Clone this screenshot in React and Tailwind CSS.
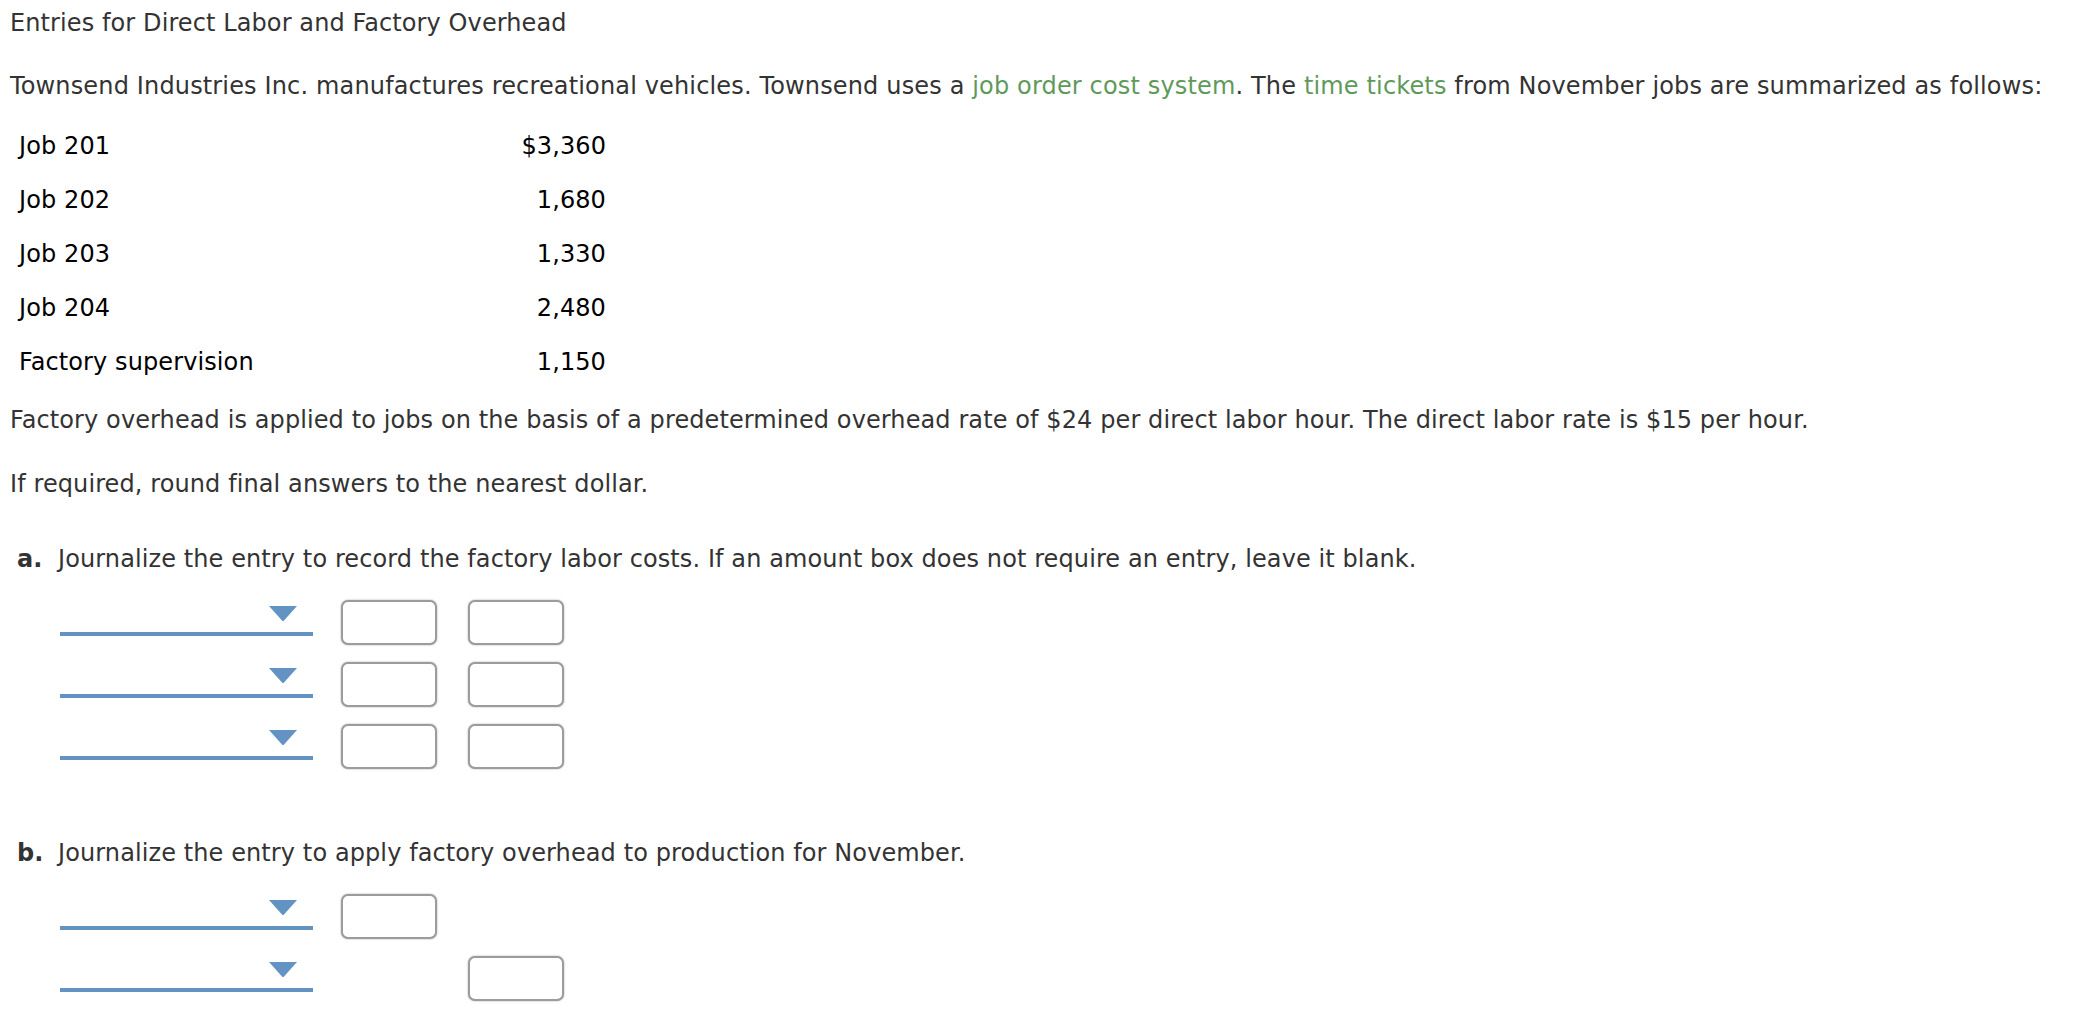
import React from "react";

const font = { fontFamily: '"DejaVu Sans", Verdana, sans-serif' };

function Caret() {
  return (
    <svg width="30" height="17" viewBox="0 0 30 17" className="absolute right-[15px] top-[5px]">
      <path d="M1 1 L29 1 L16 15.5 Q15 16.5 14 15.5 Z" fill="#6293c3" />
    </svg>
  );
}

function Dropdown() {
  return (
    <div className="relative w-[253px] h-[36px] border-b-4 border-[#6293c3] shrink-0">
      <Caret />
    </div>
  );
}

function Box() {
  return (
    <div className="w-[96px] h-[45px] rounded-[7px] border-2 border-[#9c9c9c] bg-white shadow-[0_0_2px_rgba(0,0,0,0.35)] shrink-0" />
  );
}

const rows = [
  ["Job 201", "$3,360"],
  ["Job 202", "1,680"],
  ["Job 203", "1,330"],
  ["Job 204", "2,480"],
  ["Factory supervision", "1,150"],
];

export default function App() {
  return (
    <div className="w-[2084px] h-[1012px] bg-white text-[#333] text-[24px] leading-[28px] tracking-[0.1px] pl-[10px] overflow-hidden" style={font}>
      <div className="pt-[9px]">Entries for Direct Labor and Factory Overhead</div>
      <div className="mt-[35px] whitespace-nowrap tracking-[0.15px]">
        Townsend Industries Inc. manufactures recreational vehicles. Townsend uses a{" "}
        <span className="text-[#5f9a5b]">job order cost system</span>. The{" "}
        <span className="text-[#5f9a5b]">time tickets</span> from November jobs are summarized as follows:
      </div>
      <div className="mt-[19px] ml-[9px] w-[587px] text-black">
        {rows.map(([l, v]) => (
          <div key={l} className="h-[54px] flex items-center justify-between">
            <span>{l}</span>
            <span>{v}</span>
          </div>
        ))}
      </div>
      <div className="mt-[17px]">
        Factory overhead is applied to jobs on the basis of a predetermined overhead rate of $24 per direct labor hour. The direct labor rate is $15 per hour.
      </div>
      <div className="mt-[36px]">If required, round final answers to the nearest dollar.</div>
      <div className="mt-[47px] flex">
        <span className="font-bold w-[48px] pl-[7px]">a.</span>
        <span>Journalize the entry to record the factory labor costs. If an amount box does not require an entry, leave it blank.</span>
      </div>
      <div className="mt-[27px] ml-[50px] flex flex-col gap-[17px]">
        {[0, 1, 2].map((i) => (
          <div key={i} className="flex items-start">
            <Dropdown />
            <div className="ml-[28px]"><Box /></div>
            <div className="ml-[31px]"><Box /></div>
          </div>
        ))}
      </div>
      <div className="mt-[70px] flex">
        <span className="font-bold w-[48px] pl-[7px]">b.</span>
        <span>Journalize the entry to apply factory overhead to production for November.</span>
      </div>
      <div className="mt-[27px] ml-[50px] flex flex-col gap-[17px]">
        <div className="flex items-start">
          <Dropdown />
          <div className="ml-[28px]"><Box /></div>
        </div>
        <div className="flex items-start">
          <Dropdown />
          <div className="ml-[155px]"><Box /></div>
        </div>
      </div>
    </div>
  );
}
